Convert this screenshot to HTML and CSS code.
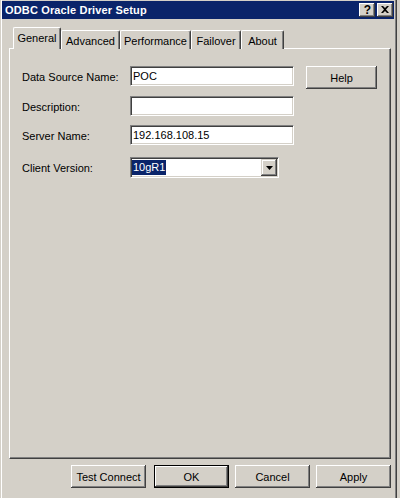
FILE: index.html
```html
<!DOCTYPE html>
<html lang="en">
<head>
<meta charset="utf-8">
<title>ODBC Oracle Driver Setup</title>
<link rel="stylesheet" href="styles.css">
</head>
<body>
<div class="window">
  <div class="titlebar">
    <span class="title">ODBC Oracle Driver Setup</span>
    <div class="caption-buttons">
      <div class="cap-btn cap-help">?</div>
      <div class="cap-btn cap-close">
        <svg width="8" height="7" viewBox="0 0 8 7"><path d="M0 0h2l2 2 2-2h2L5 3.5 8 7H6L4 5 2 7H0l3-3.5z" fill="#000"/></svg>
      </div>
    </div>
  </div>

  <div class="tabs">
    <div class="tab tab-active tab-general">General</div>
    <div class="tab tab-advanced">Advanced</div>
    <div class="tab tab-performance">Performance</div>
    <div class="tab tab-failover">Failover</div>
    <div class="tab tab-about">About</div>
  </div>

  <div class="panel">
    <div class="content">
      <div class="form">
        <div class="row row-1">
          <label class="label">Data Source Name:</label>
          <div class="field">POC</div>
        </div>
        <div class="row row-2">
          <label class="label">Description:</label>
          <div class="field"></div>
        </div>
        <div class="row row-3">
          <label class="label">Server Name:</label>
          <div class="field">192.168.108.15</div>
        </div>
        <div class="row row-4">
          <label class="label">Client Version:</label>
          <div class="combo">
            <span class="combo-sel">10gR1</span>
            <div class="combo-btn">
              <svg width="7" height="4" viewBox="0 0 7 4"><path d="M0 0h7L3.5 4z" fill="#000"/></svg>
            </div>
          </div>
        </div>
      </div>
      <div class="btn btn-help">Help</div>
    </div>
  </div>

  <div class="actions">
    <div class="btn btn-test">Test Connect</div>
    <div class="btn btn-default">OK</div>
    <div class="btn">Cancel</div>
    <div class="btn">Apply</div>
  </div>
</div>
</body>
</html>
```

FILE: styles.css
```css
html, body {
  margin: 0;
  padding: 0;
}

body {
  width: 400px;
  height: 498px;
  overflow: hidden;
  background: #d4d0c8;
  font-family: "Liberation Sans", Arial, sans-serif;
  font-size: 11px;
  color: #000;
}

.window {
  width: 397px;
  height: 498px;
  box-sizing: border-box;
  padding: 1px 2px 0 2px;
  background: #d4d0c8;
  border-left: 1px solid #d4d0c8;
  border-right: 1px solid #404040;
  box-shadow: inset 1px 0 0 #ffffff, inset -1px 0 0 #808080;
}

/* title bar */
.titlebar {
  height: 18px;
  margin-left: -1px;
  background: #0a246a;
  display: flex;
  align-items: center;
  padding: 0 1px 0 3px;
}

.title {
  color: #ffffff;
  font-weight: bold;
  font-size: 11px;
  letter-spacing: 0.15px;
}

.caption-buttons {
  margin-left: auto;
  display: flex;
  gap: 2px;
}

.cap-btn {
  width: 16px;
  height: 14px;
  box-sizing: border-box;
  background: #d4d0c8;
  box-shadow: inset -1px -1px 0 #404040, inset 1px 1px 0 #ffffff, inset -2px -2px 0 #808080;
  display: flex;
  align-items: center;
  justify-content: center;
}

.cap-help {
  font-weight: bold;
  font-size: 12px;
  line-height: 14px;
  padding-left: 1px;
}

.cap-close svg {
  display: block;
  margin-top: -1px;
}

/* tabs */
.tabs {
  display: flex;
  align-items: flex-end;
  height: 22px;
  margin-top: 8px;
  margin-bottom: -1px;
  padding-left: 10px;
  position: relative;
  z-index: 1;
}

.tab {
  height: 19px;
  box-sizing: border-box;
  border-top: 1px solid #ffffff;
  border-left: 1px solid #ffffff;
  border-right: 1px solid #404040;
  box-shadow: inset -1px 0 0 #808080;
  border-radius: 2px 2px 0 0;
  display: flex;
  align-items: center;
  justify-content: center;
  background: #d4d0c8;
  padding-top: 1px;
}

.tab-active {
  height: 22px;
  padding-bottom: 3px;
}

.tab-general { width: 48px; }
.tab-advanced { width: 59px; }
.tab-performance { width: 71px; }
.tab-failover { width: 50px; }
.tab-about { width: 43px; }

/* panel */
.panel {
  margin-left: 6px;
  width: 382px;
  height: 411px;
  box-sizing: border-box;
  border-top: 1px solid #ffffff;
  border-left: 1px solid #ffffff;
  border-right: 1px solid #404040;
  border-bottom: 1px solid #404040;
  box-shadow: inset -1px -1px 0 #808080;
}

.content {
  display: flex;
  align-items: flex-start;
  padding: 17px 0 0 12px;
}

.form {
  display: flex;
  flex-direction: column;
}

.row {
  display: flex;
  align-items: center;
}

.row-2 { margin-top: 10px; }
.row-3 { margin-top: 9px; }
.row-4 { margin-top: 12px; }

.label {
  width: 108px;
  padding-top: 1px;
}

.field {
  width: 164px;
  height: 20px;
  box-sizing: border-box;
  background: #ffffff;
  border-top: 1px solid #808080;
  border-left: 1px solid #808080;
  border-bottom: 1px solid #ffffff;
  border-right: 1px solid #ffffff;
  box-shadow: inset 1px 1px 0 #404040, inset -1px -1px 0 #d4d0c8;
  padding: 0 2px;
  line-height: 18px;
  white-space: nowrap;
}

.combo {
  width: 149px;
  height: 21px;
  box-sizing: border-box;
  background: #ffffff;
  border-top: 1px solid #808080;
  border-left: 1px solid #808080;
  border-bottom: 1px solid #ffffff;
  border-right: 1px solid #ffffff;
  box-shadow: inset 1px 1px 0 #404040, inset -1px -1px 0 #d4d0c8;
  padding: 1px;
  display: flex;
  align-items: center;
}

.combo-sel {
  background: #0a246a;
  color: #ffffff;
  line-height: 15px;
  padding: 0 1px;
}

.combo-btn {
  margin-left: auto;
  width: 16px;
  height: 17px;
  box-sizing: border-box;
  background: #d4d0c8;
  box-shadow: inset -1px -1px 0 #404040, inset 1px 1px 0 #d4d0c8, inset -2px -2px 0 #808080, inset 2px 2px 0 #ffffff;
  display: flex;
  align-items: center;
  justify-content: center;
}

.combo-btn svg {
  display: block;
}

/* buttons */
.btn {
  width: 75px;
  height: 23px;
  box-sizing: border-box;
  background: #d4d0c8;
  box-shadow: inset -1px -1px 0 #404040, inset 1px 1px 0 #ffffff, inset -2px -2px 0 #808080;
  display: flex;
  align-items: center;
  justify-content: center;
  white-space: nowrap;
}

.btn-help {
  width: 71px;
  margin-left: 12px;
}

.btn-default {
  border: 1px solid #000000;
}

.actions {
  display: flex;
  justify-content: flex-end;
  gap: 6px;
  margin-left: 6px;
  width: 382px;
  margin-top: 6px;
}

.btn-test {
  margin-right: 2px;
}
```
